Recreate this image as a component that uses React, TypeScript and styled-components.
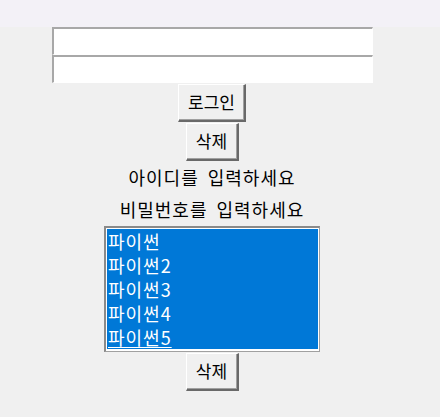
import React, { useState } from 'react'
import styled, { createGlobalStyle } from 'styled-components'

const GlobalStyle = createGlobalStyle`
  html, body {
    margin: 0;
    padding: 0;
    background: #f0f0f0;
  }
  body {
    font-family: "Noto Sans CJK KR", "Noto Sans", sans-serif;
  }
`

const TitleStrip = styled.div`
  height: 27px;
  background: #f3f1f7;
`

const Window = styled.div`
  width: 424px;
  display: flex;
  flex-direction: column;
  align-items: center;
  background: #f0f0f0;
  height: 390px;
  font-size: 17px;
  color: #000;
`

const Entry = styled.input`
  box-sizing: border-box;
  width: 321px;
  height: 28px;
  margin: 0;
  padding: 0 3px;
  background: #fff;
  border-style: solid;
  border-width: 2px 1px 1px 2px;
  border-color: #a8a8a8 #fff #fff #a8a8a8;
  outline: none;
  font: inherit;
`

const Button = styled.button<{ $w: number }>`
  box-sizing: border-box;
  width: ${p => p.$w}px;
  height: 38px;
  margin: 1px 0 0;
  padding: 0 0 2px;
  background: #f0f0f0;
  border-style: solid;
  border-width: 1px 2px 2px 1px;
  border-color: #fff #696969 #696969 #fff;
  box-shadow: inset -1px -1px 0 #a0a0a0;
  font: inherit;
  color: #000;
  cursor: pointer;
`

const Label = styled.div`
  height: 32px;
  line-height: 32px;
  white-space: nowrap;
  font-size: 18px;
  letter-spacing: 1px;
  word-spacing: 4px;
`

const ListBox = styled.ul`
  box-sizing: border-box;
  width: 216px;
  height: 126px;
  margin: 1px 0 0;
  padding: 1px;
  list-style: none;
  background: #fff;
  border-style: solid;
  border-width: 2px 1px 1px 2px;
  border-color: #8a8a8a #a0a0a0 #a0a0a0 #8a8a8a;
  overflow: hidden;
`

const Item = styled.li<{ $active: boolean }>`
  height: 24px;
  line-height: 24px;
  padding-left: 1px;
  background: #0078d7;
  color: #fff;
  white-space: nowrap;
  font-size: 18px;
  letter-spacing: 1px;
  span {
    text-decoration: ${p => (p.$active ? 'underline' : 'none')};
    text-underline-offset: 2px;
  }
`

const items = ['파이썬', '파이썬2', '파이썬3', '파이썬4', '파이썬5']

export default function App() {
  const [active] = useState(items.length - 1)

  return (
    <>
      <GlobalStyle />
      <TitleStrip />
      <Window>
        <Entry />
        <Entry />
        <Button $w={68}>로그인</Button>
        <Button $w={53}>삭제</Button>
        <Label>아이디를 입력하세요</Label>
        <Label>비밀번호를 입력하세요</Label>
        <ListBox>
          {items.map((it, i) => (
            <Item key={it} $active={i === active}>
              <span>{it}</span>
            </Item>
          ))}
        </ListBox>
        <Button $w={53}>삭제</Button>
      </Window>
    </>
  )
}
